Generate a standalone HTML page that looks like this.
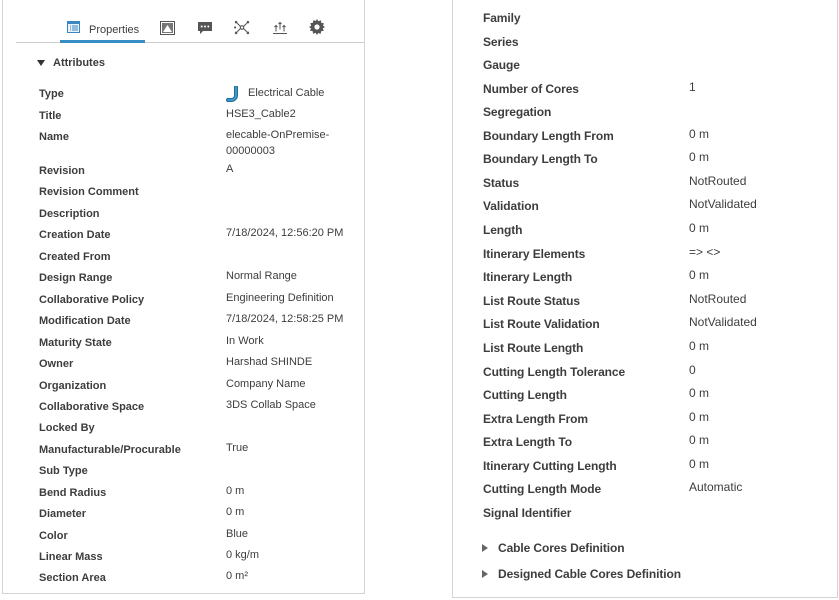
<!DOCTYPE html>
<html><head><style>
body{margin:0;width:839px;height:600px;background:#fff;position:relative;overflow:hidden;font-family:"Liberation Sans",sans-serif;}
.p{position:absolute;border:1px solid #d4d4d4;background:#fff;}
.a,.b{position:absolute;left:0;top:1px;width:839px;height:0}
.l,.v{position:absolute;line-height:14px;white-space:nowrap;}
.a .l{font-size:11px;font-weight:bold;color:#3d3d3d;left:39px}
.a .v{font-size:11px;color:#3d3d3d;left:226px}
.b .l{font-size:12px;font-weight:bold;color:#3d3d3d;left:483px;letter-spacing:-0.1px}
.b .v{font-size:12px;color:#3d3d3d;left:689px}
.tri{position:absolute;width:0;height:0;}
</style></head><body>
<div class="p" style="left:2px;top:-1px;width:361px;height:593px"></div>
<div class="p" style="left:452px;top:-1px;width:384px;height:597px"></div>

<!-- tabs -->
<div style="position:absolute;left:16px;top:42px;width:348px;height:1px;background:#cfcfcf"></div>
<div style="position:absolute;left:60px;top:40px;width:85px;height:3px;background:#368ec4"></div>
<svg style="position:absolute;left:67px;top:21px" width="13" height="12" viewBox="0 0 13 12"><rect x="0.5" y="0.5" width="12" height="11" fill="#eaf3fa" stroke="#3a86c0"/><rect x="0.5" y="0.5" width="12" height="2.5" fill="#3a86c0"/><path d="M3 5h1M5 5h6M3 7h1M5 7h6M3 9h1M5 9h6" stroke="#3a86c0"/></svg>
<div style="position:absolute;left:89px;top:23px;font-size:11px;color:#3d3d3d;line-height:14px">Properties</div>
<svg style="position:absolute;left:160px;top:21px" width="15" height="14" viewBox="0 0 15 14"><rect x="0.5" y="0.5" width="14" height="13" fill="#fff" stroke="#555"/><rect x="2" y="2" width="11" height="10" fill="#777"/><path d="M3 11l4.5-7 4.5 7z" fill="#fff"/></svg>
<svg style="position:absolute;left:197px;top:21px" width="16" height="14" viewBox="0 0 16 14"><path d="M1 1h14v9H6l-3 3V10H1z" fill="#555"/><circle cx="4.7" cy="5.5" r="1" fill="#fff"/><circle cx="8" cy="5.5" r="1" fill="#fff"/><circle cx="11.3" cy="5.5" r="1" fill="#fff"/></svg>
<svg style="position:absolute;left:234px;top:20px" width="16" height="15" viewBox="0 0 15 14"><circle cx="7.5" cy="7" r="1.6" fill="none" stroke="#555"/><circle cx="2" cy="2" r="1.2" fill="#555"/><circle cx="13" cy="2" r="1.2" fill="#555"/><circle cx="2" cy="12" r="1.2" fill="#555"/><circle cx="13" cy="12" r="1.2" fill="#555"/><circle cx="1" cy="7" r="1" fill="#555"/><path d="M3 3l3 3M12 3l-3 3M3 11l3-3M12 11l-3-3" stroke="#555"/></svg>
<svg style="position:absolute;left:272px;top:20px" width="16" height="15" viewBox="0 0 16 14"><path d="M1 13h14" stroke="#555"/><path d="M4 11V5M8 9V2M12 11V5M2.5 6.5L4 5l1.5 1.5M6.5 3.5L8 2l1.5 1.5M10.5 6.5L12 5l1.5 1.5" stroke="#555" fill="none"/></svg>
<svg style="position:absolute;left:309px;top:19px" width="16" height="16" viewBox="0 0 16 16"><path d="M8 0l1.4 2.2 2.5-.9.4 2.6 2.6.4-.9 2.5L16 8l-2.2 1.4.9 2.5-2.6.4-.4 2.6-2.5-.9L8 16l-1.4-2.2-2.5.9-.4-2.6-2.6-.4.9-2.5L0 8l2.2-1.4-.9-2.5 2.6-.4.4-2.6 2.5.9z" fill="#555"/><circle cx="8" cy="8" r="2.6" fill="#fff"/></svg>

<div class="tri" style="left:37px;top:60px;border-left:4.5px solid transparent;border-right:4.5px solid transparent;border-top:6px solid #333"></div>
<div style="position:absolute;left:53px;top:56px;font-size:11px;font-weight:bold;color:#3d3d3d;line-height:14px">Attributes</div>

<svg style="position:absolute;left:226px;top:86px" width="16" height="17" viewBox="0 0 16 17"><path d="M10 1v8c0 3-2 5-5 5H2" stroke="#1f6f9c" stroke-width="4" fill="none" stroke-linecap="round"/><path d="M10 1v8c0 3-2 5-5 5H2" stroke="#4fa3cf" stroke-width="1.5" fill="none" stroke-linecap="round"/></svg>

<div class="a">
<div class="l" style="top:86px">Type</div><div class="v" style="top:85px;left:248px">Electrical Cable</div>
<div class="l" style="top:108px">Title</div><div class="v" style="top:106px">HSE3_Cable2</div>
<div class="l" style="top:129px">Name</div><div class="v" style="top:127px">elecable-OnPremise-</div><div class="v" style="top:143px">00000003</div>
<div class="l" style="top:163px">Revision</div><div class="v" style="top:161px">A</div>
<div class="l" style="top:184px">Revision Comment</div>
<div class="l" style="top:206px">Description</div>
<div class="l" style="top:227px">Creation Date</div><div class="v" style="top:225px">7/18/2024, 12:56:20 PM</div>
<div class="l" style="top:249px">Created From</div>
<div class="l" style="top:270px">Design Range</div><div class="v" style="top:268px">Normal Range</div>
<div class="l" style="top:292px">Collaborative Policy</div><div class="v" style="top:290px">Engineering Definition</div>
<div class="l" style="top:313px">Modification Date</div><div class="v" style="top:311px">7/18/2024, 12:58:25 PM</div>
<div class="l" style="top:335px">Maturity State</div><div class="v" style="top:333px">In Work</div>
<div class="l" style="top:356px">Owner</div><div class="v" style="top:354px">Harshad SHINDE</div>
<div class="l" style="top:378px">Organization</div><div class="v" style="top:376px">Company Name</div>
<div class="l" style="top:399px">Collaborative Space</div><div class="v" style="top:397px">3DS Collab Space</div>
<div class="l" style="top:420px">Locked By</div>
<div class="l" style="top:442px">Manufacturable/Procurable</div><div class="v" style="top:440px">True</div>
<div class="l" style="top:463px">Sub Type</div>
<div class="l" style="top:485px">Bend Radius</div><div class="v" style="top:483px">0 m</div>
<div class="l" style="top:506px">Diameter</div><div class="v" style="top:504px">0 m</div>
<div class="l" style="top:528px">Color</div><div class="v" style="top:526px">Blue</div>
<div class="l" style="top:549px">Linear Mass</div><div class="v" style="top:547px">0 kg/m</div>
<div class="l" style="top:570px">Section Area</div><div class="v" style="top:568px">0 m²</div>
</div>

<div class="b">
<div class="l" style="top:10px">Family</div>
<div class="l" style="top:34px">Series</div>
<div class="l" style="top:57px">Gauge</div>
<div class="l" style="top:81px">Number of Cores</div><div class="v" style="top:79px">1</div>
<div class="l" style="top:104px">Segregation</div>
<div class="l" style="top:128px">Boundary Length From</div><div class="v" style="top:126px">0 m</div>
<div class="l" style="top:151px">Boundary Length To</div><div class="v" style="top:149px">0 m</div>
<div class="l" style="top:175px">Status</div><div class="v" style="top:173px">NotRouted</div>
<div class="l" style="top:198px">Validation</div><div class="v" style="top:196px">NotValidated</div>
<div class="l" style="top:222px">Length</div><div class="v" style="top:220px">0 m</div>
<div class="l" style="top:246px">Itinerary Elements</div><div class="v" style="top:244px">=&gt; &lt;&gt;</div>
<div class="l" style="top:269px">Itinerary Length</div><div class="v" style="top:267px">0 m</div>
<div class="l" style="top:293px">List Route Status</div><div class="v" style="top:291px">NotRouted</div>
<div class="l" style="top:316px">List Route Validation</div><div class="v" style="top:314px">NotValidated</div>
<div class="l" style="top:340px">List Route Length</div><div class="v" style="top:338px">0 m</div>
<div class="l" style="top:364px">Cutting Length Tolerance</div><div class="v" style="top:362px">0</div>
<div class="l" style="top:387px">Cutting Length</div><div class="v" style="top:385px">0 m</div>
<div class="l" style="top:411px">Extra Length From</div><div class="v" style="top:409px">0 m</div>
<div class="l" style="top:434px">Extra Length To</div><div class="v" style="top:432px">0 m</div>
<div class="l" style="top:458px">Itinerary Cutting Length</div><div class="v" style="top:456px">0 m</div>
<div class="l" style="top:481px">Cutting Length Mode</div><div class="v" style="top:479px">Automatic</div>
<div class="l" style="top:505px">Signal Identifier</div>
<div class="l" style="top:540px;left:498px">Cable Cores Definition</div>
<div class="l" style="top:566px;left:498px">Designed Cable Cores Definition</div>
</div>
<div class="tri" style="left:482px;top:544px;border-top:4.5px solid transparent;border-bottom:4.5px solid transparent;border-left:6px solid #666"></div>
<div class="tri" style="left:482px;top:570px;border-top:4.5px solid transparent;border-bottom:4.5px solid transparent;border-left:6px solid #666"></div>
</body></html>
